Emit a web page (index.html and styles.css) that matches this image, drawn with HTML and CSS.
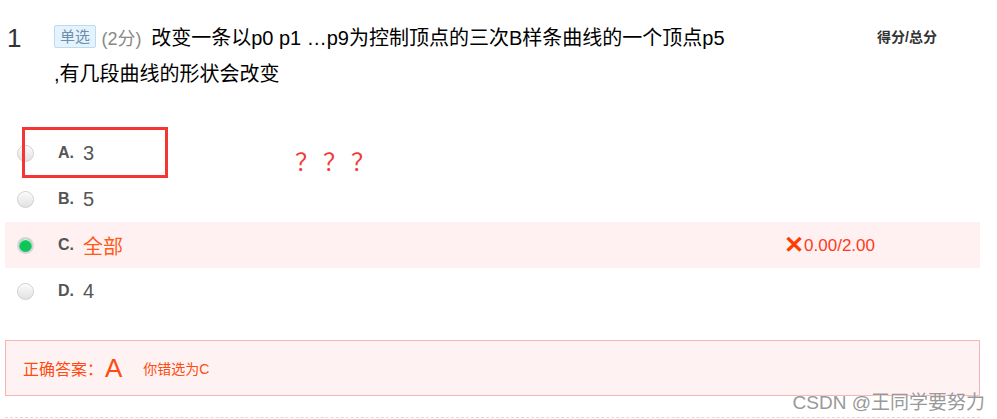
FILE: index.html
```html
<!DOCTYPE html>
<html lang="zh-CN">
<head>
    <meta charset="UTF-8">
    <title>单选题</title>
    <link rel="stylesheet" href="styles.css">
</head>
<body>

<div class="question">
    <div class="q-head">
        <div class="q-num">1</div>
        <div class="q-title">
            <span class="q-tag">单选</span>
            <span class="q-score">(2分)</span>
            <span class="q-text">改变一条以p0 p1 …p9为控制顶点的三次B样条曲线的一个顶点p5<br>,有几段曲线的形状会改变</span>
        </div>
        <div class="q-total">得分/总分</div>
    </div>

    <ul class="options">
        <li class="option">
            <span class="radio"></span>
            <span class="opt-key">A.</span>
            <span class="opt-val">3</span>
            <span class="mark-box"></span>
            <span class="mark-ask">？？？</span>
        </li>
        <li class="option">
            <span class="radio"></span>
            <span class="opt-key">B.</span>
            <span class="opt-val">5</span>
        </li>
        <li class="option wrong">
            <span class="radio checked"></span>
            <span class="opt-key">C.</span>
            <span class="opt-val">全部</span>
            <span class="opt-result"><b>✕</b>0.00/2.00</span>
        </li>
        <li class="option">
            <span class="radio"></span>
            <span class="opt-key">D.</span>
            <span class="opt-val">4</span>
        </li>
    </ul>

    <div class="answer">
        <span class="answer-label">正确答案：</span>
        <span class="answer-key">A</span>
        <span class="answer-note">你错选为C</span>
    </div>

    <div class="divider"></div>
</div>

<div class="watermark">CSDN @王同学要努力</div>

</body>
</html>
```

FILE: styles.css
```css
body {
    margin: 0;
    background: #fff;
    font-family: "Liberation Sans", "Noto Sans CJK SC", sans-serif;
    color: #333;
    position: relative;
    height: 419px;
    overflow: hidden;
}
.question {
    width: 975px;
    margin-left: 5px;
}
.q-head {
    display: flex;
    align-items: flex-start;
    padding-top: 21px;
}
.q-num {
    width: 47px;
    padding-left: 2px;
    font-size: 26px;
    line-height: 34px;
    color: #333;
}
.q-title {
    width: 700px;
    font-size: 20px;
    line-height: 35px;
    color: #000;
}
.q-tag {
    display: inline-block;
    font-size: 15px;
    line-height: 21px;
    padding: 0 5px;
    color: #6a8fb0;
    background: #e6f3fd;
    border: 1px solid #b7dcf5;
    border-radius: 2px;
    vertical-align: 3px;
}
.q-score {
    font-size: 18px;
    color: #888;
    margin: 0 4px 0 0;
}
.q-total {
    margin-left: auto;
    margin-right: 43px;
    padding-top: 5px;
    font-size: 14px;
    font-weight: bold;
    color: #333;
}
.options {
    list-style: none;
    margin: 0;
    padding: 0;
    margin-top: 38px;
}
.option {
    position: relative;
    display: flex;
    align-items: center;
    height: 46px;
    padding-left: 12px;
}
.option.wrong {
    background: #fff1f1;
}
.radio {
    width: 15px;
    height: 15px;
    border-radius: 50%;
    border: 1px solid #cfcfcf;
    background: linear-gradient(#fafafa, #e2e2e2);
    box-shadow: inset 0 1px 1px #fff;
}
.radio.checked {
    background: #0ec55a;
    border: 2px solid #d6d6d6;
    width: 13px;
    height: 13px;
}
.opt-key {
    margin-left: 24px;
    width: 25px;
    font-size: 16px;
    font-weight: bold;
    color: #555;
}
.opt-val {
    font-size: 20px;
    color: #555;
}
.wrong .opt-val {
    color: #ff5a1a;
}
.opt-result {
    margin-left: auto;
    margin-right: 105px;
    font-size: 17px;
    color: #ff3a1a;
}
.opt-result b {
    font-size: 24px;
    color: #ff3d00;
    vertical-align: -2px;
}
.mark-box {
    position: absolute;
    left: 17px;
    top: -3px;
    width: 140px;
    height: 45px;
    border: 3px solid #f53434;
}
.mark-ask {
    position: absolute;
    left: 290px;
    top: 13px;
    font-size: 24px;
    color: #f53a3a;
    letter-spacing: 4px;
}
.answer {
    margin-top: 26px;
    height: 54px;
    display: flex;
    align-items: center;
    padding-left: 17px;
    background: #fff2f2;
    border: 1px solid #f8b4b4;
    color: #ff4a10;
}
.answer-label {
    font-size: 16px;
}
.answer-key {
    font-size: 26px;
    margin-left: 2px;
    margin-right: 21px;
}
.answer-note {
    font-size: 14px;
}
.divider {
    margin-top: 21px;
    border-top: 1px dashed #ddd;
}
.watermark {
    position: absolute;
    right: 12px;
    top: 387px;
    font-size: 19px;
    color: #999;
    text-shadow: 0 0 2px #fff;
}
```
